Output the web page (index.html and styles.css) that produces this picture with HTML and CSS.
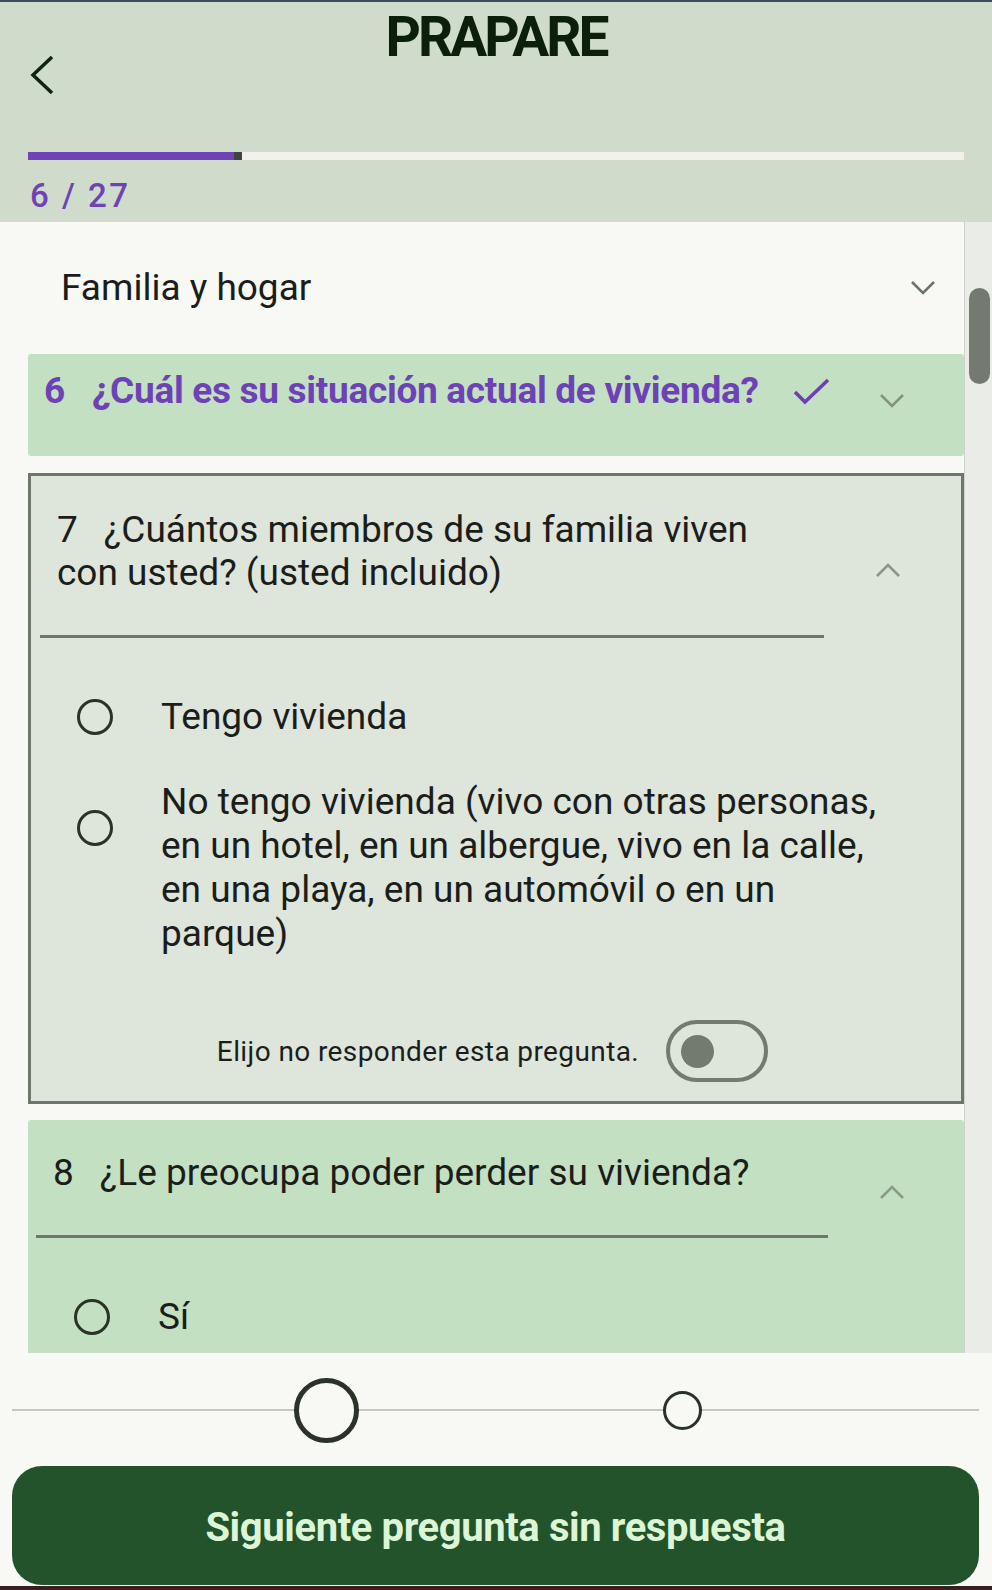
FILE: index.html
```html
<!DOCTYPE html>
<html lang="es">
<head>
<meta charset="utf-8">
<title>PRAPARE</title>
<link rel="stylesheet" href="styles.css">
</head>
<body>
<div class="app">
  <div class="statusline"></div>
  <header class="header">
    <div class="header-top">
      <button class="back" aria-label="Atrás">
        <svg width="28" height="42" viewBox="0 0 28 42"><path d="M24 3 L5 21 L24 39" fill="none" stroke="#0f2410" stroke-width="3.5"/></svg>
      </button>
      <h1 class="title">PRAPARE</h1>
      <div class="spacer"></div>
    </div>
    <div class="progress">
      <div class="progress-fill" style="width:206px"></div>
      <div class="progress-mark"></div>
    </div>
    <div class="counter">6 / 27</div>
  </header>

  <main class="main">
    <div class="scroll">
      <div class="section-row">
        <span class="section-title">Familia y hogar</span>
        <svg class="chev" width="26" height="16" viewBox="0 0 26 16"><path d="M2 2 L13 13 L24 2" fill="none" stroke="#6b7468" stroke-width="2.6"/></svg>
      </div>

      <div class="q q-done">
        <div class="q-done-text"><span class="qnum">6</span>¿Cuál es su situación actual de vivienda?</div>
        <svg class="check" width="38" height="28" viewBox="0 0 38 28"><path d="M2 14 L12 24 L35 2" fill="none" stroke="#6f3fb9" stroke-width="3.6"/></svg>
        <svg class="chev chev-done" width="26" height="16" viewBox="0 0 26 16"><path d="M2 2 L13 13 L24 2" fill="none" stroke="#849480" stroke-width="2.6"/></svg>
      </div>

      <div class="q q-open q-active">
        <div class="q-head">
          <div class="q-main">
            <div class="q-text"><span class="qnum">7</span>¿Cuántos miembros de su familia viven con usted? (usted incluido)</div>
          </div>
          <svg class="chev chev-up" width="26" height="16" viewBox="0 0 26 16"><path d="M2 14 L13 3 L24 14" fill="none" stroke="#8c9489" stroke-width="2.6"/></svg>
        </div>
        <div class="options">
          <div class="opt">
            <span class="radio"></span>
            <span class="opt-text">Tengo vivienda</span>
          </div>
          <div class="opt opt-multi">
            <span class="radio"></span>
            <span class="opt-text">No tengo vivienda (vivo con otras personas, en un hotel, en un albergue, vivo en la calle, en una playa, en un automóvil o en un parque)</span>
          </div>
        </div>
        <div class="decline">
          <span class="decline-text">Elijo no responder esta pregunta.</span>
          <span class="switch"><span class="knob"></span></span>
        </div>
      </div>

      <div class="q q-open q-green">
        <div class="q-head">
          <div class="q-main">
            <div class="q-text"><span class="qnum">8</span>¿Le preocupa poder perder su vivienda?</div>
          </div>
          <svg class="chev chev-up" width="26" height="16" viewBox="0 0 26 16"><path d="M2 14 L13 3 L24 14" fill="none" stroke="#8a9c87" stroke-width="2.6"/></svg>
        </div>
        <div class="options">
          <div class="opt">
            <span class="radio"></span>
            <span class="opt-text">Sí</span>
          </div>
        </div>
      </div>
    </div>
    <div class="scrollbar"><div class="thumb"></div></div>
  </main>

  <footer class="footer">
    <div class="steps">
      <span class="step step-big"></span>
      <span class="step step-small"></span>
    </div>
    <button class="next">Siguiente pregunta sin respuesta</button>
  </footer>
  <div class="bottomline"></div>
</div>
</body>
</html>
```

FILE: styles.css
```css
* { box-sizing: border-box; }
html, body { margin: 0; padding: 0; }
body {
  width: 992px;
  height: 1590px;
  overflow: hidden;
  font-family: Roboto, "Noto Sans", sans-serif;
  background: #f8f9f4;
  color: #1b1d1a;
}
.app { display: flex; flex-direction: column; height: 1590px; }
.statusline { height: 2px; background: #3d4c62; flex: none; }

.header {
  flex: none;
  height: 220px;
  background: #cfdbcb;
  padding: 0 28px;
}
.header-top {
  display: grid;
  grid-template-columns: 80px 1fr 80px;
  height: 150px;
}
.back {
  background: none;
  border: 0;
  padding: 0;
  margin-top: 52px;
  width: 28px;
  height: 42px;
  align-self: start;
}
.back svg { display: block; }
.title {
  margin: 7px 0 0;
  text-align: center;
  font-size: 55px;
  font-weight: 700;
  letter-spacing: -3px;
  color: #0c1f0b;
  line-height: 56px;
}
.progress {
  display: flex;
  height: 8px;
  background: #eff1ea;
}
.progress-fill { background: #7043b4; height: 8px; }
.progress-mark { background: #404340; width: 8px; height: 8px; }
.counter {
  margin-top: 17px;
  padding-left: 2px;
  font-size: 33px;
  font-weight: 500;
  letter-spacing: 2.5px;
  color: #6f42b6;
  line-height: 38px;
}

.main {
  flex: none;
  height: 1131px;
  display: flex;
  overflow: hidden;
}
.scroll {
  flex: 1;
  padding-left: 28px;
  overflow: hidden;
}
.scrollbar {
  flex: none;
  width: 28px;
  background: #eaece7;
  border-left: 1px solid #cdd2ca;
  padding: 66px 2px 0 4px;
}
.thumb {
  height: 96px;
  background: #737a6f;
  border-radius: 11px;
}

.section-row {
  height: 132px;
  display: flex;
  align-items: center;
  padding-left: 33px;
  padding-right: 28px;
}
.section-title {
  flex: 1;
  font-size: 37px;
  color: #1b1d1a;
  line-height: 44px;
  margin-top: 0;
}

.chev { display: block; flex: none; }

.q { width: 936px; }
.q-done {
  height: 102px;
  background: #c4e0c2;
  border-radius: 3px;
  display: flex;
  align-items: flex-start;
  padding: 15px 0 0 16px;
}
.q-done-text {
  font-size: 37px;
  font-weight: 700;
  color: #6e42b7;
  line-height: 44px;
  letter-spacing: -0.3px;
  white-space: nowrap;
}
.q-done .qnum { margin-right: 27px; }
.check { margin: 9px 0 0 34px; }
.chev-done { margin: 24px 0 0 48px; }

.q-active {
  margin-top: 17px;
  background: #dee5da;
  border: 3px solid #6f776c;
  padding: 32px 0 19px 0;
}
.q-green {
  margin-top: 16px;
  background: #c4e0c2;
  border-radius: 3px;
  padding: 31px 0 16px 0;
}
.q-head { display: flex; align-items: flex-start; }
.q-main {
  width: 784px;
  margin-left: 9px;
  border-bottom: 3px solid #6f776c;
  padding: 0 30px 41px 17px;
}
.q-green .q-main { width: 792px; margin-left: 8px; padding-bottom: 41px; }
.q-text {
  font-size: 37px;
  line-height: 43px;
  color: #1b1d1a;
}
.qnum { margin-right: 26px; }
.chev-up { margin: 54px 0 0 51px; }
.q-green .chev-up { margin-top: 33px; }

.opt {
  display: flex;
  align-items: flex-start;
  padding-left: 46px;
  margin-top: 57px;
}
.opt + .opt { margin-top: 41px; }
.radio {
  flex: none;
  width: 36px;
  height: 36px;
  border: 3.5px solid #2b3228;
  border-radius: 50%;
  margin-top: 4px;
}
.opt-multi .radio { margin-top: 30px; }
.opt-text {
  margin-left: 48px;
  font-size: 37px;
  line-height: 44px;
  color: #1b1d1a;
  width: 730px;
}

.decline {
  margin-top: 64px;
  display: flex;
  align-items: center;
  justify-content: center;
  padding-right: 7px;
}
.decline-text {
  font-size: 28px;
  color: #1b1d1a;
  letter-spacing: 0.4px;
}
.switch {
  margin-left: 27px;
  width: 102px;
  height: 62px;
  border: 4px solid #737b70;
  border-radius: 31px;
  display: flex;
  align-items: center;
  padding-left: 11px;
}
.knob {
  width: 33px;
  height: 33px;
  border-radius: 50%;
  background: #737b70;
}

.footer {
  flex: none;
  height: 233px;
  background: #f8f9f4;
  padding: 0 13px 0 12px;
  display: flex;
  flex-direction: column;
}
.steps {
  margin-top: 24px;
  height: 66px;
  position: relative;
  display: flex;
  align-items: center;
}
.steps::before {
  content: "";
  position: absolute;
  left: 0;
  right: 0;
  top: 32px;
  height: 2px;
  background: #c3c9c0;
}
.step {
  position: relative;
  border-radius: 50%;
  background: #f8f9f4;
  flex: none;
}
.step-big {
  width: 65px;
  height: 65px;
  border: 5px solid #2b3228;
  margin-left: 282px;
}
.step-small {
  width: 39px;
  height: 39px;
  border: 3.5px solid #2b3228;
  margin-left: 304px;
}
.next {
  margin-top: 23px;
  height: 119px;
  border: 0;
  border-radius: 30px;
  background: #22532a;
  color: #dcf5d6;
  font-family: Roboto, "Noto Sans", sans-serif;
  font-size: 40px;
  font-weight: 700;
  letter-spacing: -0.4px;
  padding: 4px 0 0;
}
.bottomline { flex: none; height: 4px; background: #3a1d22; }
```
